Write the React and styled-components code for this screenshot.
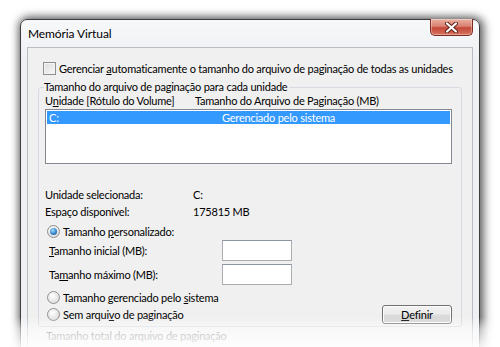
import React from 'react'
import styled, { createGlobalStyle } from 'styled-components'

const GlobalStyle = createGlobalStyle`
    html, body {
        margin: 0;
        padding: 0;
        background: #fff;
        width: 500px;
        height: 347px;
        overflow: hidden;
    }
    body {
        font-family: Lato, "Liberation Sans", sans-serif;
        font-size: 11px;
        letter-spacing: -0.22px;
        color: #000;
        white-space: nowrap;
    }
`;

const Page = styled.div`
    position: relative;
    width: 500px;
    height: 347px;
    padding: 19px 20px 0 20px;
    box-sizing: border-box;
    overflow: hidden;
`;

const Window = styled.div`
    width: 460px;
    height: 360px;
    box-sizing: border-box;
    border: 1px solid #3c3c3c;
    border-radius: 7px 7px 0 0;
    background: linear-gradient(#f7f8fa, #eef0f3 40px, #eef0f3);
    box-shadow: 2px 0 10px 2px rgba(0, 0, 0, 0.55), -1px 0 8px rgba(0, 0, 0, 0.3);
    display: flex;
    flex-direction: column;
`;

const TitleBar = styled.div`
    height: 27px;
    display: flex;
    align-items: flex-start;
    justify-content: space-between;
    padding: 0 6px 0 7px;
    .title {
        padding-top: 6px;
        font-size: 12px;
        letter-spacing: -0.1px;
    }
`;

const CloseButton = styled.div`
    width: 43px;
    height: 17px;
    margin-top: -1px;
    box-sizing: border-box;
    border: 1px solid #7a2b1f;
    border-top: none;
    border-radius: 0 0 5px 5px;
    background: linear-gradient(#eab0a2, #d98272 45%, #c4483a 55%, #d7745d);
    display: flex;
    align-items: center;
    justify-content: center;
    box-shadow: inset 0 0 0 1px rgba(255, 255, 255, 0.35);
`;

const Client = styled.div`
    flex: 1;
    margin: 0 6px;
    border: 1px solid #b8bcc2;
    border-bottom: none;
    background: #f0f0f0;
    padding: 14px 10px 0 10px;
    display: flex;
    flex-direction: column;
`;

const CheckRow = styled.label`
    display: flex;
    align-items: center;
    gap: 3px;
    margin-left: 5px;
    height: 13px;
`;

const Box = styled.span`
    flex-shrink: 0;
    width: 13px;
    height: 13px;
    box-sizing: border-box;
    border: 1px solid #8e8f8f;
    background: linear-gradient(135deg, #dcdcdc, #f8f8f8);
    box-shadow: inset 0 0 0 1px #f4f4f4;
`;

const GroupBox = styled.fieldset`
    margin: 5px 0 0 0;
    padding: 0 9px 5px 6px;
    border: 1px solid #d5dbe0;
    border-radius: 3px;
    min-width: 0;
    legend {
        padding: 0 2px 0 0;
        margin-left: -1px;
        line-height: 14px;
    }
`;

const Header = styled.div`
    display: grid;
    grid-template-columns: 150px 1fr;
    height: 14px;
    line-height: 14px;
`;

const ListBox = styled.div`
    margin-top: 1px;
    height: 55px;
    box-sizing: border-box;
    border: 1px solid #828790;
    background: #fff;
    padding: 1px;
`;

const ListRow = styled.div`
    display: grid;
    grid-template-columns: 173px 1fr;
    height: 13px;
    line-height: 13px;
    padding-left: 2px;
    background: ${props => (props.$selected ? '#3399ff' : 'transparent')};
    color: ${props => (props.$selected ? '#fff' : '#000')};
`;

const InfoGrid = styled.div`
    display: grid;
    grid-template-columns: 148px 1fr;
    grid-auto-rows: 14px;
    row-gap: 3px;
    margin-top: 24px;
    line-height: 14px;
`;

const RadioRow = styled.div`
    display: flex;
    align-items: center;
    gap: 3px;
    height: 14px;
    margin-left: 2px;
    margin-top: ${props => props.$top || 0}px;
`;

const Radio = styled.span`
    flex-shrink: 0;
    width: 13px;
    height: 13px;
    box-sizing: border-box;
    border-radius: 50%;
    border: 1px solid #8e8f8f;
    background: radial-gradient(circle at 40% 35%, #ffffff, #dcdcdc 80%);
    display: flex;
    align-items: center;
    justify-content: center;
    &::after {
        content: '';
        display: ${props => (props.$checked ? 'block' : 'none')};
        width: 7px;
        height: 7px;
        border-radius: 50%;
        background: radial-gradient(circle at 40% 35%, #a6e0ff, #2b7bc2 60%, #1c4f86);
    }
`;

const SizeRow = styled.div`
    display: grid;
    grid-template-columns: 173px 70px;
    align-items: center;
    margin-left: 4px;
    margin-top: ${props => props.$top || 0}px;
`;

const TextInput = styled.div`
    height: 21px;
    box-sizing: border-box;
    border: 1px solid #abadb3;
    border-top-color: #8a97a3;
    background: #fff;
`;

const BottomRow = styled.div`
    display: flex;
    justify-content: space-between;
    align-items: flex-end;
    margin-top: 5px;
`;

const RadioColumn = styled.div`
    display: flex;
    flex-direction: column;
    gap: 3px;
`;

const Button = styled.div`
    width: 70px;
    height: 19px;
    box-sizing: border-box;
    border: 1px solid #707070;
    border-radius: 3px;
    background: linear-gradient(#f2f2f2, #ebebeb 48%, #dddddd 52%, #cfcfcf);
    box-shadow: inset 0 0 0 1px #fcfcfc;
    display: flex;
    align-items: center;
    justify-content: center;
    margin-bottom: -3px;
`;

const TotalLabel = styled.div`
    margin: 2px 0 0 8px;
    color: #6d6d6d;
`;

const Fade = styled.div`
    position: absolute;
    left: 0;
    right: 0;
    bottom: 0;
    height: 30px;
    background: linear-gradient(rgba(255, 255, 255, 0), rgba(255, 255, 255, 0.55) 40%, rgba(255, 255, 255, 0.9));
    pointer-events: none;
`;

const U = styled.span`
    text-decoration: underline;
`;

function App() {
    return (
        <>
            <GlobalStyle />
            <Page>
                <Window>
                    <TitleBar>
                        <span className="title">Memória Virtual</span>
                        <CloseButton>
                            <svg width="13" height="11" viewBox="0 0 13 11">
                                <path d="M2 1.5 L11 9.5 M11 1.5 L2 9.5" stroke="#5a1d14" strokeWidth="4" strokeLinecap="round" />
                                <path d="M2 1.5 L11 9.5 M11 1.5 L2 9.5" stroke="#fff" strokeWidth="2.2" strokeLinecap="round" />
                            </svg>
                        </CloseButton>
                    </TitleBar>
                    <Client>
                        <CheckRow>
                            <Box />
                            <span>Gerenciar <U>a</U>utomaticamente o tamanho do arquivo de paginação de todas as unidades</span>
                        </CheckRow>
                        <GroupBox>
                            <legend>Tamanho do arquivo de paginação para cada unidade</legend>
                            <Header>
                                <span>U<U>n</U>idade [Rótulo do Volume]</span>
                                <span>Tamanho do Arquivo de Paginação (MB)</span>
                            </Header>
                            <ListBox>
                                <ListRow $selected>
                                    <span>C:</span>
                                    <span>Gerenciado pelo sistema</span>
                                </ListRow>
                            </ListBox>
                            <InfoGrid>
                                <span>Unidade selecionada:</span>
                                <span>C:</span>
                                <span>Espaço disponível:</span>
                                <span>175815 MB</span>
                            </InfoGrid>
                            <RadioRow $top={5}>
                                <Radio $checked />
                                <span>Tamanho <U>p</U>ersonalizado:</span>
                            </RadioRow>
                            <SizeRow $top={2}>
                                <span><U>T</U>amanho inicial (MB):</span>
                                <TextInput />
                            </SizeRow>
                            <SizeRow $top={3}>
                                <span>Ta<U>m</U>anho máximo (MB):</span>
                                <TextInput />
                            </SizeRow>
                            <BottomRow>
                                <RadioColumn>
                                    <RadioRow>
                                        <Radio />
                                        <span>Tamanho gerenciado pelo <U>s</U>istema</span>
                                    </RadioRow>
                                    <RadioRow>
                                        <Radio />
                                        <span>Sem arqui<U>v</U>o de paginação</span>
                                    </RadioRow>
                                </RadioColumn>
                                <Button><span><U>D</U>efinir</span></Button>
                            </BottomRow>
                        </GroupBox>
                        <TotalLabel>Tamanho total do arquivo de paginação</TotalLabel>
                    </Client>
                </Window>
                <Fade />
            </Page>
        </>
    )
}

export default App
